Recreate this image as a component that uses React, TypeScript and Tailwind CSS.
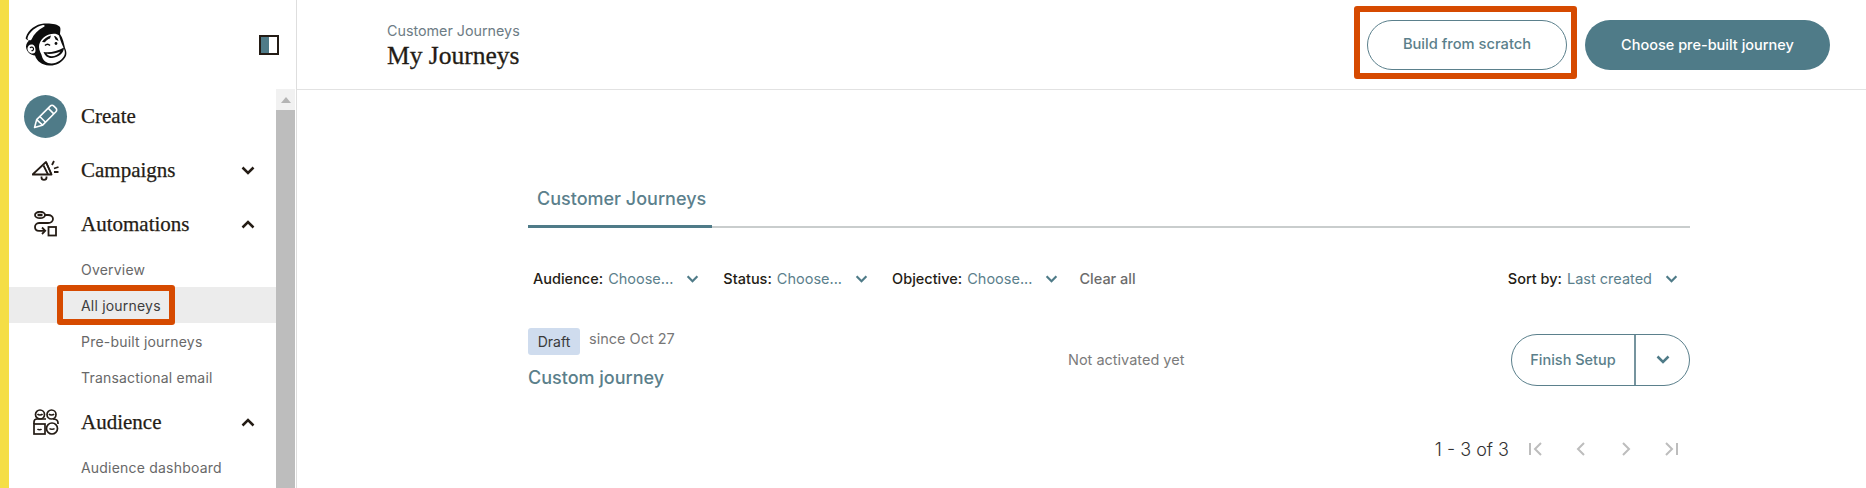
const sans = "font-['Inter','Liberation_Sans',sans-serif]";

function Chevron({ up = false, className = "" }: { up?: boolean; className?: string }) {
  return (
    <svg viewBox="0 0 14 9" className={className} fill="none" stroke="currentColor" strokeWidth="2.5">
      <path d={up ? "M1.500 7.500 7 2l5.500 5.500" : "M1.500 1.500 7 7l5.500-5.500"} />
    </svg>
  );
}

function Logo() {
  return (
    <svg viewBox="0 0 42 43" className="w-[42px] h-[43px]">
      <path d="M1 14C3 7 11 1 19 .5c6-.5 14 .5 16 3.500 1 2 0 5 0 7 3 4 4 10 5 14 2 4 2 8-1 11-3 4-9 7-15 6.500-7-.5-12-4-14-10-4 0-9-4-9-9 0-3 2-5 3-6-2-1-4-1-3-3.500z" fill="#0d0d0d" />
      <path d="M2.500 15C4 9 11 3.500 18 2c1.500-.3 2.500 1 1 1.800C13 7 9 11 6.500 16.500c-1 1.500-4.500 1-4-1.500z" fill="#fff" />
      <path d="M7.500 21.500c-3-.5-5 1.500-5 4s2 5 5 5c2 0 3-1 3-3 0-3-1-5.500-3-6z" fill="#fff" />
      <path d="M5 25c1-1.500 3-1 3.500.5.300 1.500-1 2.500-2 2" stroke="#0d0d0d" strokeWidth="1.100" fill="none" />
      <path d="M14 24c0-6 5-11 10-12.500 4-1 8-1 10 1 1 3 2 7 4 11 1.500 3 2.500 6 1.500 8.500-1.500 4-7 8.500-13 8.500-5 0-8.500-3-9.500-7-.5-3-3-5.500-3-9.500z" fill="#fff" />
      <path d="M17 19c2-3 5-5.500 9-6.500l-1 3c-2 .5-4 2-5 3.800z" fill="#0d0d0d" />
      <path d="M29 13c2 0 4 2 4.500 5l-3-1.500z" fill="#0d0d0d" />
      <path d="M18.500 29c6 1 14-.5 20.500-4.500 0 5-5 10-12 10.500-4 .3-7-2-8.500-6z" fill="#0d0d0d" />
      <path d="M21.500 30.800c5 .4 10-.5 14-2.300-2 3-5.500 4.700-9 4.700-2 0-3.800-.8-5-2.400z" fill="#fff" />
      <path d="M20 22.500c1.500-1.500 3.500-1.500 5 0" stroke="#0d0d0d" strokeWidth="1.600" fill="none" />
      <circle cx="31" cy="20.500" r="1.400" fill="#0d0d0d" />
    </svg>
  );
}

function Megaphone() {
  return (
    <svg viewBox="0 0 27 21" className="w-[27px] h-[21px]" fill="none" stroke="#241c15" strokeWidth="1.800">
      <path d="M.5 14.500h19L14 2z" strokeLinejoin="round" />
      <path d="M14 2l5.500 12.500M11.500 5.500l4.500 9" />
      <path d="M9.500 16.500v1c0 1.500 1 2.300 2.500 2.300s2.500-.8 2.500-2.300v-1" />
      <path d="M20 5l2-4M22 8.500l4.500-1.500M22 12h4.500" />
    </svg>
  );
}

function Flow() {
  return (
    <svg viewBox="0 0 23 26" className="w-[23px] h-[26px]" fill="none" stroke="#241c15" strokeWidth="1.800">
      <ellipse cx="6" cy="4" rx="5" ry="3.200" />
      <path d="M3.500 4h5" strokeWidth="2.500" />
      <path d="M11 4h3c3 0 5 2 5 4s-2 4-5 4H5c-2.500 0-4 2-4 4s1.500 3.800 4 3.800h6" />
      <path d="M8 16.500l3.200 3.300L8 23" />
      <rect x="14.500" y="16" width="7.500" height="8.500" />
    </svg>
  );
}

function People() {
  return (
    <svg viewBox="0 0 26 26" className="w-[26px] h-[26px]" fill="none" stroke="#241c15" strokeWidth="1.700">
      <circle cx="7" cy="5.500" r="4.500" />
      <circle cx="18.500" cy="5.500" r="4.500" />
      <path d="M4.500 5c1 1.300 4 1.300 5 0M16 5c1 1.300 4 1.300 5 0" />
      <path d="M1 15v-2c0-2 1.500-3 3-3h9" />
      <path d="M20 10c3 0 5 1.500 5 4v1" />
      <rect x="1" y="15" width="11" height="10" />
      <path d="M4.500 20c1 1 3 1 4 0" />
      <circle cx="19" cy="19.500" r="5.500" />
      <path d="M16.500 19.500c1 1 4 1 5 0" />
    </svg>
  );
}

function Pencil() {
  return (
    <svg viewBox="0 0 24 24" className="w-[25px] h-[25px]" fill="none" stroke="#fff" strokeWidth="1.500" strokeLinejoin="round">
      <path d="M1.500 22.500l2-7.500L16.500 2c1-1 2.500-1 3.500 0l2 2c1 1 1 2.500 0 3.500L9 20.500z" />
      <path d="M3.500 15l6 5.500M6.500 12l5.500 5.500M14.500 4l5.500 5.500" />
    </svg>
  );
}

const serifLabel = "font-['Liberation_Serif',serif] text-[21px] leading-none text-[#241c15] [-webkit-text-stroke:0.25px_#241c15]";

function MainRow({ icon, label, chevron }: { icon: React.ReactNode; label: string; chevron?: "up" | "down" }) {
  return (
    <div className="flex items-center h-[54px]">
      <div className="w-[72px] flex justify-center shrink-0 pl-[1px]">{icon}</div>
      <span className={serifLabel}>{label}</span>
      {chevron && <Chevron up={chevron === "up"} className="ml-auto mr-[21px] w-[14px] h-[9px] text-[#241c15]" />}
    </div>
  );
}

function SubRow({ label, active, marked }: { label: string; active?: boolean; marked?: boolean }) {
  return (
    <div className={`relative flex items-center h-[36px] pl-[72px] text-[14px] tracking-[0.2px] ${active ? "bg-[#ececec] text-[#3d3d3d]" : "text-[#686868]"}`}>
      {label}
      {marked && <span className="absolute left-[48px] top-[-2px] w-[118px] h-[40px] border-[6px] border-[#d64a00] rounded-[3px]" />}
    </div>
  );
}

function Filter({ label, value }: { label: string; value: string }) {
  return (
    <div className="flex items-center text-[14.5px]">
      <span className="font-medium text-[#241c15]">{label}:</span>
      <span className="ml-[5px] text-[#5b808c]">{value}</span>
      <Chevron className="ml-[13px] w-[13px] h-[8px] text-[#4f7b88]" />
    </div>
  );
}

function PageIcon({ d }: { d: string }) {
  return (
    <svg viewBox="0 0 16 16" className="w-[16px] h-[16px]" fill="none" stroke="#bdbdbd" strokeWidth="2">
      <path d={d} />
    </svg>
  );
}

export default function App() {
  return (
    <div className={`flex h-[488px] w-[1866px] overflow-hidden bg-white ${sans}`}>
      <div className="w-[9px] shrink-0 bg-[#f5de45]" />
      <aside className="w-[288px] shrink-0 flex flex-col border-r border-[#dedede]">
        <div className="h-[89px] shrink-0 flex items-center justify-between pl-[16px] pr-[17px]">
          <Logo />
          <div className="w-[20px] h-[20px] border-[2px] border-[#241c15] flex">
            <div className="w-1/2 bg-[#4f7b88]" />
          </div>
        </div>
        <div className="flex-1 min-h-0 flex">
          <nav className="flex-1 overflow-hidden">
            <div className="flex items-center h-[54px]">
              <div className="w-[72px] flex justify-center shrink-0">
                <div className="w-[43px] h-[43px] rounded-full bg-[#4f7b88] flex items-center justify-center">
                  <Pencil />
                </div>
              </div>
              <span className={serifLabel}>Create</span>
            </div>
            <MainRow icon={<Megaphone />} label="Campaigns" chevron="down" />
            <MainRow icon={<Flow />} label="Automations" chevron="up" />
            <SubRow label="Overview" />
            <SubRow label="All journeys" active marked />
            <SubRow label="Pre-built journeys" />
            <SubRow label="Transactional email" />
            <MainRow icon={<People />} label="Audience" chevron="up" />
            <SubRow label="Audience dashboard" />
          </nav>
          <div className="w-[19px] mr-[1px] shrink-0 flex flex-col">
            <div className="h-[21px] bg-[#f1f1f1] flex items-center justify-center">
              <div className="w-0 h-0 border-x-[5px] border-x-transparent border-b-[6px] border-b-[#b4b4b4]" />
            </div>
            <div className="flex-1 bg-[#bdbdbd]" />
          </div>
        </div>
      </aside>
      <main className="flex-1 min-w-0 flex flex-col">
        <header className="h-[90px] shrink-0 border-b border-[#e2e2e2] flex items-center justify-between pl-[90px] pr-[36px]">
          <div className="pt-[3px]">
            <div className="text-[14.3px] leading-[20px] text-[#6d7c85]">Customer Journeys</div>
            <div className="font-['Liberation_Serif',serif] text-[25.5px] leading-[30px] text-[#241c15] [-webkit-text-stroke:0.3px_#241c15]">My Journeys</div>
          </div>
          <div className="flex items-center gap-[18px]">
            <div className="relative">
              <button className="block w-[200px] h-[50px] rounded-full border border-[#5b808c] text-[14.7px] font-medium text-[#5b7f8b]">Build from scratch</button>
              <span className="absolute left-[-13px] top-[-14px] w-[223px] h-[73px] border-[6px] border-[#d64a00] rounded-[3px]" />
            </div>
            <button className="w-[245px] h-[50px] rounded-full bg-[#4f7b88] text-[14.5px] font-medium text-white">Choose pre-built journey</button>
          </div>
        </header>
        <section className="ml-[231px] w-[1162px] pt-[90px]">
          <div className="border-b-[2px] border-[#c9cdcd] h-[48px]">
            <div className="w-[184px] h-[48px] border-b-[3px] border-[#4f7b88] pl-[9px] pt-[7px] text-[18px] font-medium leading-[24px] text-[#5b808c] whitespace-nowrap">Customer Journeys</div>
          </div>
          <div className="mt-[39px] h-[24px] flex items-center pl-[5px] pr-[12px] gap-[24px]">
            <Filter label="Audience" value="Choose..." />
            <Filter label="Status" value="Choose..." />
            <Filter label="Objective" value="Choose..." />
            <span className="-ml-[3px] text-[14.5px] text-[#6b6b6b] font-medium">Clear all</span>
            <div className="ml-auto"><Filter label="Sort by" value="Last created" /></div>
          </div>
          <div className="mt-[37px] flex items-center">
            <div className="w-[540px] shrink-0">
              <div className="flex items-start">
                <span className="h-[27px] w-[52px] rounded-[3px] bg-[#cfdcee] flex items-center justify-center text-[14px] text-[#3a3a3a]">Draft</span>
                <span className="ml-[9px] text-[14.5px] text-[#777]">since Oct 27</span>
              </div>
              <div className="mt-[10px] text-[18px] leading-[26px] font-medium text-[#5b7f8b]">Custom journey</div>
            </div>
            <span className="text-[14.5px] text-[#7b7b7b]">Not activated yet</span>
            <div className="ml-auto h-[52px] w-[179px] rounded-full border border-[#5b808c] flex text-[#5b7f8b]">
              <div className="w-[124px] border-r-[2px] border-[#76949e] flex items-center justify-center text-[14.5px] font-medium">Finish Setup</div>
              <div className="flex-1 flex items-center justify-center">
                <Chevron className="w-[14px] h-[9px] text-[#4f7b88]" />
              </div>
            </div>
          </div>
          <div className="mt-[40px] flex items-center justify-end h-[36px] pr-[11px]">
            <span className="text-[18px] text-[#333] mr-[19px] font-light">1 - 3 of 3</span>
            <div className="flex gap-[29px]">
              <PageIcon d="M2 2v12M13 2 7 8l6 6" />
              <PageIcon d="M11 2 5 8l6 6" />
              <PageIcon d="m5 2 6 6-6 6" />
              <PageIcon d="m3 2 6 6-6 6M14 2v12" />
            </div>
          </div>
        </section>
      </main>
    </div>
  );
}
